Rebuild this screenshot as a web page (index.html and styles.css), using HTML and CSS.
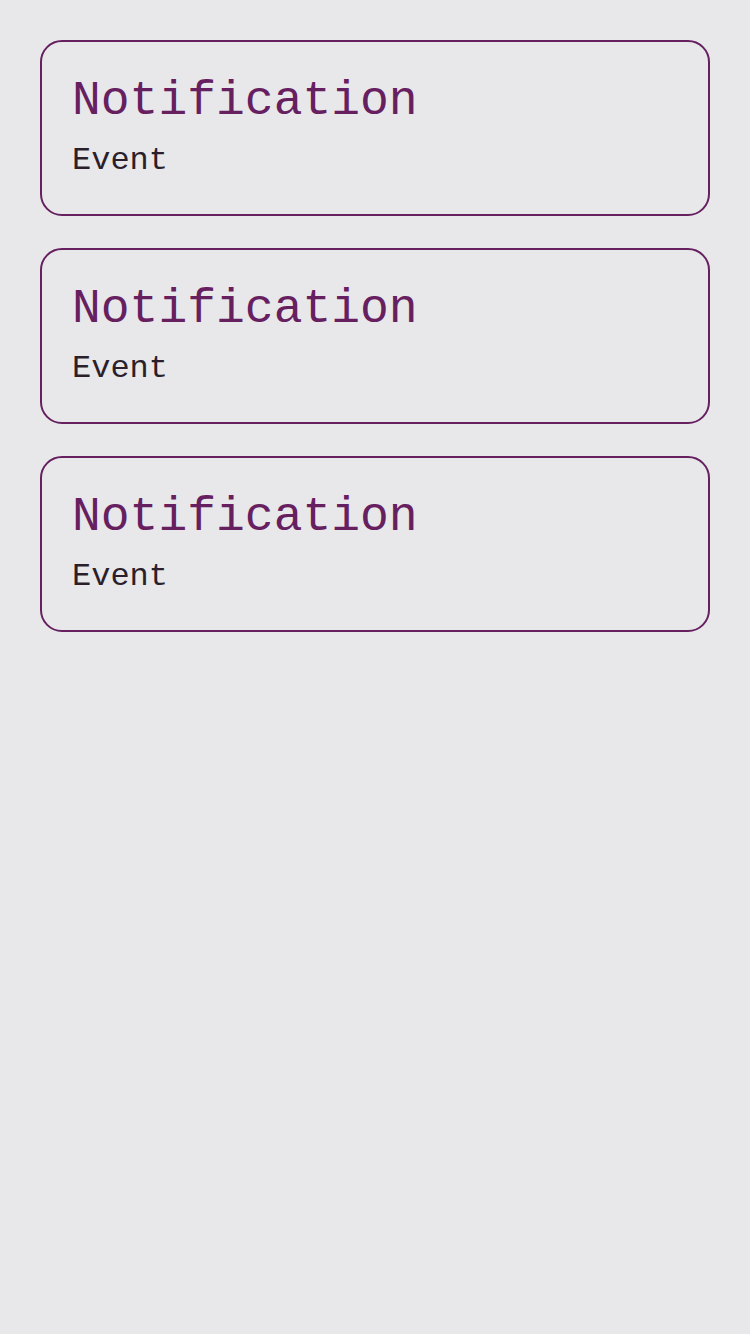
FILE: index.html
```html
<!DOCTYPE html>
<html>
<head>
<meta charset="utf-8">
<link rel="stylesheet" href="styles.css">
</head>
<body>
<div class="list">
  <div class="card">
    <div class="title">Notification</div>
    <div class="sub">Event</div>
  </div>
  <div class="card">
    <div class="title">Notification</div>
    <div class="sub">Event</div>
  </div>
  <div class="card">
    <div class="title">Notification</div>
    <div class="sub">Event</div>
  </div>
</div>
</body>
</html>
```
FILE: styles.css
```css
html, body {
  margin: 0;
  padding: 0;
  background: #e8e8ea;
}
body {
  font-family: "Liberation Mono", monospace;
  width: 750px;
  height: 1334px;
}
.list {
  padding: 40px;
  display: flex;
  flex-direction: column;
  gap: 32px;
}
.card {
  border: 2px solid #66205f;
  border-radius: 22px;
  padding: 32px 30px 0 30px;
  height: 176px;
  box-sizing: border-box;
}
.title {
  font-size: 48px;
  line-height: 54px;
  color: #66205f;
}
.sub {
  margin-top: 15px;
  font-size: 32px;
  line-height: 36px;
  color: #2a1f2b;
}
```
